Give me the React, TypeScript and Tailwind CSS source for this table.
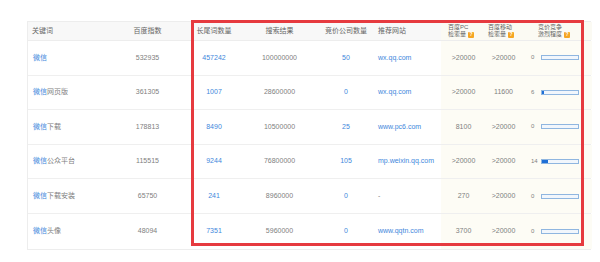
import React from "react"

// keyword rows: prefix "微信" is highlighted blue
const rows = [
  { kw: "", idx: "532935", tail: "457242", results: "100000000", bid: "50", site: "wx.qq.com", pc: ">20000", mob: ">20000", comp: 0 },
  { kw: "网页版", idx: "361305", tail: "1007", results: "28600000", bid: "0", site: "wx.qq.com", pc: ">20000", mob: "11600", comp: 6 },
  { kw: "下载", idx: "178813", tail: "8490", results: "10500000", bid: "25", site: "www.pc6.com", pc: "8100", mob: ">20000", comp: 0 },
  { kw: "公众平台", idx: "115515", tail: "9244", results: "76800000", bid: "105", site: "mp.weixin.qq.com", pc: ">20000", mob: ">20000", comp: 14 },
  { kw: "下载安装", idx: "65750", tail: "241", results: "8960000", bid: "0", site: "-", pc: "270", mob: ">20000", comp: 0 },
  { kw: "头像", idx: "48094", tail: "7351", results: "5960000", bid: "0", site: "www.qqtn.com", pc: "3700", mob: ">20000", comp: 0 },
]

const cols = "grid grid-cols-[83px_81px_44px_87px_46px_72px_45px_37px_69px]"

function Tip() {
  return (
    <span className="ml-[2px] inline-flex h-[6px] w-[6px] items-center justify-center rounded-[1px] bg-[#f5a623] text-[5px] font-bold leading-none text-white">
      ?
    </span>
  )
}

function Bar({ value }: { value: number }) {
  // bar is about 38px wide, filled part grows with the value
  const fill = value === 0 ? 0 : Math.max(2, Math.round(value * 0.4))
  return (
    <div className="h-[5px] w-[38px] border border-[#8fb6e0] bg-[#f1f6fc]">
      <div className="h-full bg-[#1f6fd6]" style={{ width: fill }} />
    </div>
  )
}

export default function App() {
  return (
    <div
      className="h-[262px] w-[600px] bg-white pl-[27px] pt-[21px] text-[7px] text-[#808080]"
      style={{ fontFamily: '"Liberation Sans", "Noto Sans CJK SC", sans-serif' }}
    >
      <div className="relative w-[564px] border border-[#ededed]">
        {/* header */}
        <div className={`${cols} h-[19px] items-center border-b border-[#ededed] bg-[#f8f8f8] text-[#666]`}>
          <div className="pl-[4px]">关键词</div>
          <div className="pr-[8px] text-center">百度指数</div>
          <div className="text-center">长尾词数量</div>
          <div className="text-center">搜索结果</div>
          <div className="text-center">竞价公司数量</div>
          <div className="pl-[9px]">推荐网站</div>
          <div className="flex h-full flex-col justify-center bg-[#fbfaf3] pl-[7px] text-[6px] leading-[7px]">
            <span>百度PC</span>
            <span className="flex items-center">检索量<Tip /></span>
          </div>
          <div className="flex h-full flex-col justify-center bg-[#fbfaf3] pl-[2px] text-[6px] leading-[7px]">
            <span>百度移动</span>
            <span className="flex items-center">检索量<Tip /></span>
          </div>
          <div className="flex h-full flex-col justify-center bg-[#fbfaf3] pl-[15px] text-[6px] leading-[7px]">
            <span>竞价竞争</span>
            <span className="flex items-center">激烈程度<Tip /></span>
          </div>
        </div>

        {rows.map((r, i) => (
          <div
            key={i}
            className={`${cols} h-[34.6px] items-center ${i < rows.length - 1 ? "border-b border-[#efefef]" : ""}`}
          >
            <div className="pl-[5px]">
              <span className="text-[#4287dc]">微信</span>
              {r.kw}
            </div>
            <div className="pr-[8px] text-center">{r.idx}</div>
            <div className="text-center text-[#4287dc]">{r.tail}</div>
            <div className="text-center">{r.results}</div>
            <div className="text-center text-[#4287dc]">{r.bid}</div>
            <div className={`pl-[9px] ${r.site === "-" ? "" : "text-[#4287dc]"}`}>{r.site}</div>
            <div className="flex h-full items-center justify-center bg-[#fdfcf5]">{r.pc}</div>
            <div className="flex h-full items-center justify-center bg-[#fdfcf5] pr-[2px]">{r.mob}</div>
            <div className="flex h-full items-center bg-[#fdfcf5] pl-[8px]">
              <span className="w-[10px] text-[6px]">{r.comp}</span>
              <Bar value={r.comp} />
            </div>
          </div>
        ))}

        {/* red highlight frame drawn over the table */}
        <div className="pointer-events-none absolute left-[163px] top-[-2px] h-[226px] w-[393px] border-[3px] border-[#e63a3f]" />
      </div>
    </div>
  )
}
